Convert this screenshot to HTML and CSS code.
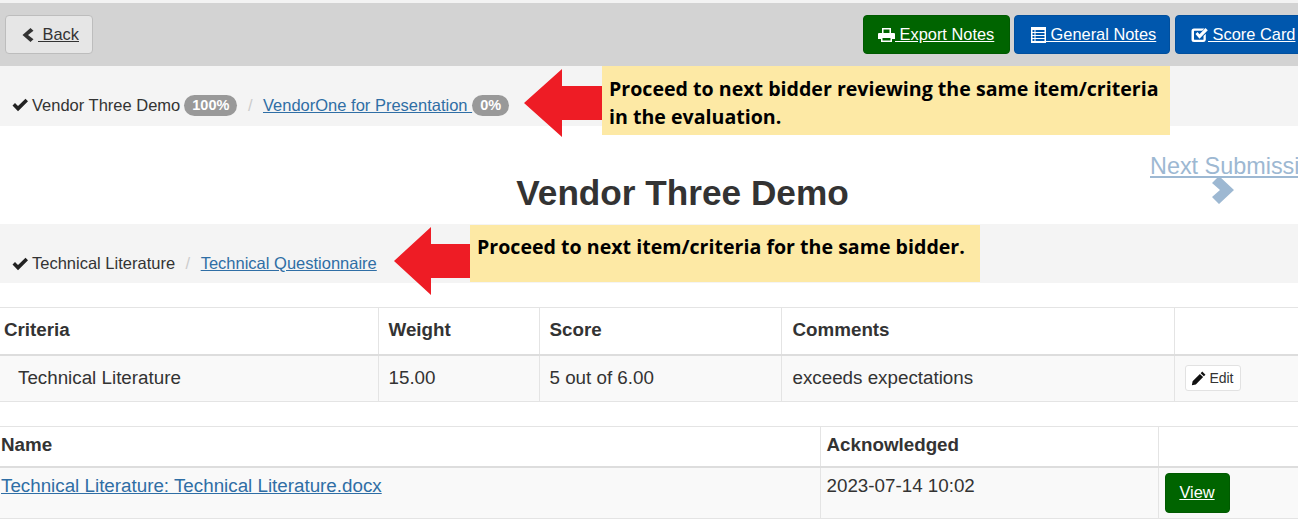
FILE: index.html
```html
<!DOCTYPE html>
<html lang="en">
<head>
<meta charset="utf-8">
<title>Vendor Three Demo</title>
<link rel="stylesheet" href="styles.css">
</head>
<body>
<div class="page">
  <div class="toolbar">
    <a class="btn btn-back" href="#"><svg class="ico" viewBox="0 0 12 16"><path d="M8.500 1 L0.500 8 L8.500 15 L11.500 12.300 L6 8 L11.500 3.700 Z"/></svg> Back</a>
    <div class="actions">
      <a class="btn btn-green" href="#"><svg class="ico" viewBox="0 0 17 16"><path fill-rule="evenodd" d="M4 1h9v5h3a1 1 0 0 1 1 1v5h-3v3H3v-3H0V7a1 1 0 0 1 1-1h3z M5.500 2.500V6h6V2.500z M4.500 11v2.500h8V11z"/></svg> Export Notes</a>
      <a class="btn btn-blue" href="#"><svg class="ico ico-list" viewBox="0 0 15 16"><path fill-rule="evenodd" d="M0 0h15v16H0z M1.500 3v2h2V3z M4.500 3v2h9V3z M1.500 6v2h2V6z M4.500 6v2h9V6z M1.500 9v2h2V9z M4.500 9v2h9V9z M1.500 12v2h2v-2z M4.500 12v2h9v-2z"/></svg> General Notes</a>
      <a class="btn btn-blue btn-cut" href="#"><svg class="ico" viewBox="0 0 17 16"><path d="M3 1.500h10.500l-2.300 2.300H3.500a.5.5 0 0 0-.5.5v7.900c0 .3.200.5.500.5h8.500a.5.500 0 0 0 .5-.5V9l2.300-2.300v6a2.500 2.500 0 0 1-2.500 2.300H3a2.500 2.500 0 0 1-2.500-2.500V4a2.500 2.500 0 0 1 2.500-2.500z"/><path d="M4.500 7l2-2 2 2.200L14.500 1l2.300 2.300-8.300 8.400z"/></svg> Score Card</a>
    </div>
  </div>

  <div class="crumb crumb-top">
    <svg class="check" viewBox="0 0 16 14"><path d="M0.500 7.500 L3 5 L6 8 L13.500 0.800 L16 3.300 L6 13.200 Z"/></svg>
    <span>Vendor Three Demo</span>
    <span class="badge">100%</span>
    <span class="sep">/</span>
    <a class="link" href="#">VendorOne for Presentation </a><span class="badge">0%</span>
  </div>

  <div class="heading">
    <h1>Vendor Three Demo</h1>
    <a class="next" href="#">Next Submission</a>
    <svg class="next-chevron" viewBox="0 0 24 30"><path d="M8 1 L23 15 L8 29 L1 22 L9 15 L1 8 Z"/></svg>
  </div>

  <div class="crumb crumb-second">
    <svg class="check" viewBox="0 0 16 14"><path d="M0.500 7.500 L3 5 L6 8 L13.500 0.800 L16 3.300 L6 13.200 Z"/></svg>
    <span>Technical Literature</span>
    <span class="sep">/</span>
    <a class="link" href="#">Technical Questionnaire</a>
  </div>

  <table class="grid grid-criteria">
    <colgroup><col class="c1"><col class="c2"><col class="c3"><col class="c4"><col class="c5"></colgroup>
    <thead>
      <tr><th>Criteria</th><th class="pad">Weight</th><th class="pad">Score</th><th class="pad-c">Comments</th><th></th></tr>
    </thead>
    <tbody>
      <tr>
        <td class="indent">Technical Literature</td><td class="pad">15.00</td><td class="pad">5 out of 6.00</td><td class="pad-c">exceeds expectations</td>
        <td class="edit-cell"><a class="edit" href="#"><svg class="pencil" viewBox="0 0 14 14"><path d="M10.500 0.500 L13.500 3.500 L12 5 L9 2 Z M8.300 2.700 L11.300 5.700 L4.500 12.500 L0.800 13.300 L1.500 9.500 Z"/></svg> Edit</a></td>
      </tr>
    </tbody>
  </table>

  <table class="grid grid-docs">
    <colgroup><col class="d1"><col class="d2"><col class="d3"></colgroup>
    <thead>
      <tr><th class="flush">Name</th><th class="pad-s">Acknowledged</th><th></th></tr>
    </thead>
    <tbody>
      <tr>
        <td class="flush top"><a class="link" href="#">Technical Literature: Technical Literature.docx</a></td>
        <td class="pad-s top">2023-07-14 10:02</td>
        <td class="view-cell"><a class="btn btn-green btn-view" href="#">View</a></td>
      </tr>
    </tbody>
  </table>

  <svg class="arrow arrow-one" viewBox="0 0 78 68"><path d="M0 34 L38 0 V17 H78 V51 H38 V68 Z"/></svg>
  <div class="note note-one">Proceed to next bidder reviewing the same item/criteria in the evaluation.</div>
  <svg class="arrow arrow-two" viewBox="0 0 76 68"><path d="M0 34 L37 0 V17 H76 V51 H37 V68 Z"/></svg>
  <div class="note note-two">Proceed to next item/criteria for the same bidder.</div>
</div>
</body>
</html>
```
FILE: styles.css
```css
* { box-sizing: border-box; }
html, body { margin: 0; padding: 0; background: #fff; }
body { font-family: "Liberation Sans", Arial, sans-serif; font-size: 18.8px; color: #333; }
.page { position: relative; width: 1298px; height: 528px; overflow: hidden; }

.toolbar { height: 66px; background: #d3d3d3; border-top: 3px solid #f3f3f3; display: flex; justify-content: space-between; align-items: flex-start; padding: 12px 0 0 5px; }
.actions { display: flex; gap: 4px; margin-right: -11px; }
.btn { display: inline-flex; align-items: center; height: 39px; border-radius: 4px; font-size: 16.4px; text-decoration: underline; white-space: pre; }
.ico { width: 17px; height: 16px; fill: currentColor; flex: none; }
.ico-list { width: 15px; }
.btn-back { width: 88px; padding-left: 16px; background: #e6e6e6; border: 1px solid #bdbdbd; color: #333; }
.btn-back .ico { width: 12px; margin-right: 4px; }
.btn-green { background: #006400; color: #fff; border: 1px solid #005a00; }
.btn-blue { background: #0057ad; color: #fff; border: 1px solid #004f9e; }
.actions .btn-green { width: 147px; padding-left: 14px; }
.actions .btn-blue { width: 156px; padding-left: 16px; }
.actions .btn-cut { width: 134px; margin-left: 1px; padding-left: 15px; }

.crumb { display: flex; align-items: center; background: #f4f4f4; font-size: 16.5px; color: #333; padding-left: 12px; white-space: pre; }
.crumb-top { height: 60px; padding-top: 18px; }
.crumb-second { height: 59px; padding-top: 20px; }
.check { width: 16px; height: 14px; margin-right: 4px; fill: #222; flex: none; }
.sep { color: #ccc; margin: 0 10.500px; }
.link { color: #2f6ea5; text-decoration: underline; }
.badge { display: inline-block; background: #999; color: #fff; font-size: 14.5px; font-weight: 700; line-height: 15px; padding: 3px 8px; border-radius: 10.500px; margin-left: 4px; }
.link + .badge { margin-left: 0; }

.heading { position: relative; height: 98px; }
.heading h1 { margin: 0; padding: 46px 0 0 67px; text-align: center; font-size: 35.200px; line-height: 42px; font-weight: 700; color: #333; }
.next { position: absolute; left: 1150px; top: 26px; font-size: 23.400px; line-height: 28px; color: #9db8d2; text-decoration: underline; white-space: nowrap; }
.next-chevron { position: absolute; left: 1211px; top: 49px; width: 24px; height: 30px; fill: #9db8d2; }

.grid { width: 1298px; table-layout: fixed; border-collapse: collapse; font-size: 18.8px; }
.grid th { text-align: left; font-weight: 700; background: #fff; border: 1px solid #e4e4e4; border-bottom: 2px solid #ddd; border-left: 0; padding: 0 0 2px; }
.grid td { background: #f9f9f9; border: 1px solid #e4e4e4; border-top: 0; border-left: 0; padding: 0; }
.grid th:last-child, .grid td:last-child { border-right: 0; }
.grid-criteria { margin-top: 24px; }
.grid-criteria th { height: 47px; padding-left: 4px; }
.grid-criteria td { height: 47px; }
.grid-criteria .pad { padding-left: 10px; }
.grid-criteria .pad-c { padding-left: 11px; }
.grid-criteria .indent { padding-left: 18px; }
.c1 { width: 378px; } .c2 { width: 161px; } .c3 { width: 242px; } .c4 { width: 393px; } .c5 { width: 124px; }
.edit-cell { padding-left: 10px !important; }
.edit { display: inline-flex; align-items: center; height: 26px; width: 56px; padding-left: 5px; border: 1px solid #e2e2e2; border-radius: 3px; background: #fff; color: #333; font-size: 14px; text-decoration: none; white-space: pre; }
.pencil { width: 15px; height: 15px; fill: #111; }

.grid-docs { margin-top: 24px; }
.grid-docs th { height: 40px; }
.grid-docs td { height: 52px; }
.grid-docs .flush { padding-left: 1px; }
.grid-docs .pad-s { padding-left: 6px; }
.grid-docs .top { vertical-align: top; padding-top: 7px; line-height: 21px; }
.d1 { width: 820px; } .d2 { width: 338px; } .d3 { width: 140px; }
.view-cell { padding-left: 6px !important; vertical-align: top; padding-top: 5px !important; }
.btn-view { width: 65px; height: 40px; justify-content: center; font-size: 16.400px; }

.arrow { position: absolute; fill: #ee1c25; }
.arrow-one { left: 524px; top: 69px; width: 78px; height: 68px; }
.arrow-two { left: 394px; top: 227px; width: 76px; height: 68px; }
.note { position: absolute; background: #fde9a5; color: #000; font-family: "Open Sans", sans-serif; font-weight: 700; font-size: 19.600px; line-height: 28px; }
.note-one { left: 602px; top: 66px; width: 568px; height: 69px; padding: 9px 4px 0 7px; }
.note-two { left: 470px; top: 225px; width: 510px; height: 57px; padding: 8px 4px 0 7px; }
```
